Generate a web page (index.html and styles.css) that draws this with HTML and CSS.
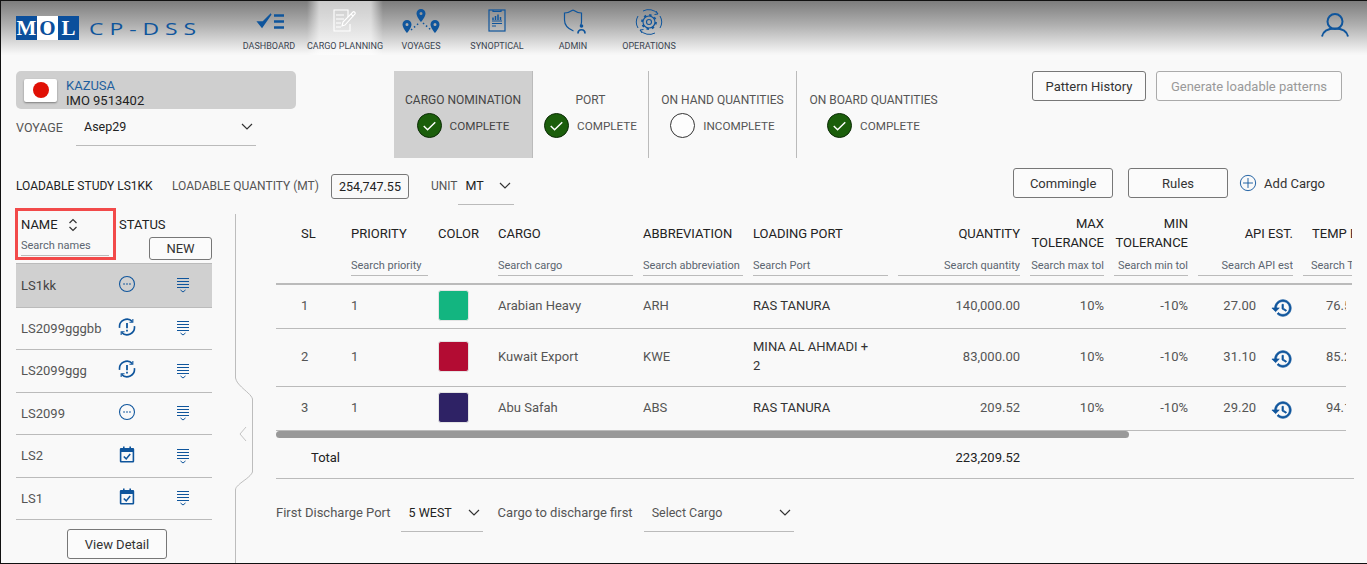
FILE: index.html
```html
<!DOCTYPE html>
<html lang="en">
<head>
    <meta charset="UTF-8">
    <title>CP-DSS Cargo Planning</title>
    <link rel="stylesheet" href="styles.css">
</head>
<body>

<header class="topbar">
    <div class="brand">
        <div class="logo"><span>M</span><span class="logo-mid">O</span><span>L</span></div>
        <div class="brand-name">CP-DSS</div>
    </div>
    <nav class="nav">
        <a class="nav-item">
            <svg class="nav-icon" viewBox="0 0 36 26"><path d="M7 13l4 5 9-13-8 8z" fill="#0f559c" stroke="#0f559c" stroke-width="1.5"/><path d="M23 6.500h10M23 12.500h10M23 18.500h10" stroke="#0f559c" stroke-width="2.400"/></svg>
            DASHBOARD
        </a>
        <a class="nav-item active">
            <svg class="nav-icon" viewBox="0 0 36 26" fill="none" stroke="#fff" stroke-width="1.100"><path d="M21 8V1H7v21h16v-7"/><path d="M9 6h8M9 10h8M9 14h5M9 18h5"/><path d="M15 17l1-4 10-10c1-1 3 1 2 2L18 16z M24 5l2.500 2.500"/></svg>
            CARGO PLANNING
        </a>
        <a class="nav-item">
            <svg class="nav-icon" viewBox="0 0 36 26"><g fill="#0f559c"><path d="M18 0a4.500 4.500 0 0 0-4.500 4.500C13.500 8 18 13 18 13s4.500-5 4.500-8.500A4.500 4.500 0 0 0 18 0zm0 3a1.500 1.500 0 1 1 0 3 1.500 1.500 0 0 1 0-3z"/><path d="M4 11a4.500 4.500 0 0 0-4.500 4.500C-.5 19 4 24 4 24s4.500-5 4.500-8.500A4.500 4.500 0 0 0 4 11zm0 3a1.500 1.500 0 1 1 0 3 1.500 1.500 0 0 1 0-3z"/><path d="M32 11a4.500 4.500 0 0 0-4.500 4.500C27.500 19 32 24 32 24s4.500-5 4.500-8.500A4.500 4.500 0 0 0 32 11zm0 3a1.500 1.500 0 1 1 0 3 1.500 1.500 0 0 1 0-3z"/></g><path d="M8 21l8-7M20 14l8 7" stroke="#0f559c" stroke-width="1.500" stroke-dasharray="1.500 2.500" fill="none"/></svg>
            VOYAGES
        </a>
        <a class="nav-item">
            <svg class="nav-icon" viewBox="0 0 36 26" fill="none" stroke="#0f559c"><rect x="10" y="1" width="16" height="21" stroke-width="1.200"/><path d="M14 1v1.500h8V1" stroke-width="1.200"/><path d="M13 12h10M13 14.500h10M13 17h4" stroke-width="1.100"/><path d="M14 11V8.500M16.500 11V7M19 11V5.500M21.500 11V8" stroke-width="1.500"/></svg>
            SYNOPTICAL
        </a>
        <a class="nav-item">
            <svg class="nav-icon" viewBox="0 0 36 26" fill="none" stroke="#0f559c"><path d="M18 1c3 2 6 3 8.500 3v9c0 2-.5 3-1.200 4M18 1c-3 2-6 3-8.500 3v7c0 6 4 9 9 11" stroke-width="1.200"/><circle cx="26.500" cy="17" r="1.800" fill="#0f559c" stroke="none"/><path d="M23 24.500c0-5 7-5 7 0" stroke-width="1.700"/></svg>
            ADMIN
        </a>
        <a class="nav-item">
            <svg class="nav-icon" viewBox="0 0 36 26" fill="none" stroke="#0f559c"><path d="M27 5a12 12 0 0 0-15-3M9 21a12 12 0 0 0 15 3M7 7a12 12 0 0 0 0 12M29 19a12 12 0 0 0 0-12" stroke-width="1" /><circle cx="18" cy="13" r="2.500" stroke-width="1.100"/><circle cx="18" cy="13" r="6" stroke-width="1.100"/><circle cx="18" cy="13" r="7" stroke-width="1.800" stroke-dasharray="2.400 3.100"/><path d="M25 2l2 3-3.500.5M11 24l-2-3 3.500-.5" stroke-width="1"/></svg>
            OPERATIONS
        </a>
    </nav>
    <svg class="user-icon" viewBox="0 0 28 24" fill="none" stroke="#0f559c" stroke-width="2"><circle cx="14" cy="8.500" r="7.500"/><path d="M1 23.500c1-5 6-8 13-8s12 3 13 8"/></svg>
</header>

<section class="info">
    <div class="ship-col">
        <div class="ship-card">
            <div class="flag"><span class="flag-sun"></span></div>
            <div>
                <div class="ship-name">KAZUSA</div>
                <div class="ship-imo">IMO 9513402</div>
            </div>
        </div>
        <div class="voyage">
            <span class="voyage-label">VOYAGE</span>
            <div class="select voyage-select">Asep29
                <svg class="chev" viewBox="0 0 12 7"><path d="M1 1l5 5 5-5"/></svg>
            </div>
        </div>
    </div>

    <div class="steps">
        <div class="step step-active">
            <div class="step-title">CARGO NOMINATION</div>
            <div class="step-state">
                <span class="tick"><svg viewBox="0 0 24 24"><path d="M6 12.500l4 4 8-8"/></svg></span>COMPLETE
            </div>
        </div>
        <div class="step step-port">
            <div class="step-title">PORT</div>
            <div class="step-state">
                <span class="tick"><svg viewBox="0 0 24 24"><path d="M6 12.500l4 4 8-8"/></svg></span>COMPLETE
            </div>
        </div>
        <div class="step step-hand">
            <div class="step-title">ON HAND QUANTITIES</div>
            <div class="step-state">
                <span class="tick tick-empty"></span>INCOMPLETE
            </div>
        </div>
        <div class="step step-board">
            <div class="step-title">ON BOARD QUANTITIES</div>
            <div class="step-state">
                <span class="tick"><svg viewBox="0 0 24 24"><path d="M6 12.500l4 4 8-8"/></svg></span>COMPLETE
            </div>
        </div>
    </div>

    <div class="info-actions">
        <button class="btn btn-history">Pattern History</button>
        <button class="btn btn-generate">Generate loadable patterns</button>
    </div>
</section>

<section class="study">
    <span class="study-name">LOADABLE STUDY LS1KK</span>
    <span class="study-label">LOADABLE QUANTITY (MT)</span>
    <span class="qty-box">254,747.55</span>
    <span class="study-label unit-label">UNIT</span>
    <div class="select unit-select">MT
        <svg class="chev" viewBox="0 0 12 7"><path d="M1 1l5 5 5-5"/></svg>
    </div>
    <div class="study-actions">
        <button class="btn btn-study">Commingle</button>
        <button class="btn btn-study">Rules</button>
        <div class="add-cargo">
            <svg viewBox="0 0 20 20" fill="none" stroke="#0f559c"><circle cx="10" cy="10" r="8.500"/><path d="M10 4.500v11M4.500 10h11"/></svg>
            Add Cargo
        </div>
    </div>
</section>

<main class="main">
    <aside class="studies">
        <div class="studies-head">
            <div class="name-head">
                <div class="name-title">NAME
                    <svg class="sort" viewBox="0 0 10 14" fill="none" stroke="#333" stroke-width="1.200"><path d="M1.500 5L5 1.500 8.500 5M1.500 9L5 12.500 8.500 9"/></svg>
                </div>
                <input class="search" placeholder="Search names">
            </div>
            <div class="status-head">
                <div class="status-title">STATUS</div>
                <button class="btn btn-new">NEW</button>
            </div>
        </div>

        <div class="study-row selected">
            <span>LS1kk</span>
            <svg class="row-icon" viewBox="0 0 20 20" fill="none" stroke="#0f559c" stroke-width="1.200"><circle cx="10" cy="10" r="8.300"/><path d="M6 10h1.400M9.300 10h1.400M12.600 10H14" stroke-width="1.800"/></svg>
            <svg class="row-menu" viewBox="0 0 14 16" fill="none" stroke="#0f559c" stroke-width="1"><path d="M1 1.500h12M1 4.500h12M1 7.500h12M1 10.500h12"/><path d="M4.500 13l2.500 2 2.500-2"/></svg>
        </div>
        <div class="study-row">
            <span>LS2099gggbb</span>
            <svg class="row-icon" viewBox="0 0 20 20" fill="none" stroke="#0f559c" stroke-width="1.800"><path d="M1.800 11A8.300 8.300 0 0 1 16 4M18.200 9A8.300 8.300 0 0 1 4 16"/><path d="M16.500 1v3.800h-3.800M3.500 19v-3.800h3.800" stroke-width="1.200"/><path d="M10 5.500v6M10 13v2" stroke-width="2"/></svg>
            <svg class="row-menu" viewBox="0 0 14 16" fill="none" stroke="#0f559c" stroke-width="1"><path d="M1 1.500h12M1 4.500h12M1 7.500h12M1 10.500h12"/><path d="M4.500 13l2.500 2 2.500-2"/></svg>
        </div>
        <div class="study-row">
            <span>LS2099ggg</span>
            <svg class="row-icon" viewBox="0 0 20 20" fill="none" stroke="#0f559c" stroke-width="1.800"><path d="M1.800 11A8.300 8.300 0 0 1 16 4M18.200 9A8.300 8.300 0 0 1 4 16"/><path d="M16.500 1v3.800h-3.800M3.500 19v-3.800h3.800" stroke-width="1.200"/><path d="M10 5.500v6M10 13v2" stroke-width="2"/></svg>
            <svg class="row-menu" viewBox="0 0 14 16" fill="none" stroke="#0f559c" stroke-width="1"><path d="M1 1.500h12M1 4.500h12M1 7.500h12M1 10.500h12"/><path d="M4.500 13l2.500 2 2.500-2"/></svg>
        </div>
        <div class="study-row">
            <span>LS2099</span>
            <svg class="row-icon" viewBox="0 0 20 20" fill="none" stroke="#0f559c" stroke-width="1.200"><circle cx="10" cy="10" r="8.300"/><path d="M6 10h1.400M9.300 10h1.400M12.600 10H14" stroke-width="1.800"/></svg>
            <svg class="row-menu" viewBox="0 0 14 16" fill="none" stroke="#0f559c" stroke-width="1"><path d="M1 1.500h12M1 4.500h12M1 7.500h12M1 10.500h12"/><path d="M4.500 13l2.500 2 2.500-2"/></svg>
        </div>
        <div class="study-row">
            <span>LS2</span>
            <svg class="row-icon row-cal" viewBox="0 0 20 20"><path d="M5 0h2v2h6V0h2v2h2.500A1.500 1.500 0 0 1 19 3.500v15a1.500 1.500 0 0 1-1.500 1.500h-15A1.500 1.500 0 0 1 1 18.500v-15A1.500 1.500 0 0 1 2.500 2H5z M3 7v11h14V7z" fill="#0f559c" fill-rule="evenodd"/><path d="M6 12.500l3 3 5-6" fill="none" stroke="#0f559c" stroke-width="2"/></svg>
            <svg class="row-menu" viewBox="0 0 14 16" fill="none" stroke="#0f559c" stroke-width="1"><path d="M1 1.500h12M1 4.500h12M1 7.500h12M1 10.500h12"/><path d="M4.500 13l2.500 2 2.500-2"/></svg>
        </div>
        <div class="study-row">
            <span>LS1</span>
            <svg class="row-icon row-cal" viewBox="0 0 20 20"><path d="M5 0h2v2h6V0h2v2h2.500A1.500 1.500 0 0 1 19 3.500v15a1.500 1.500 0 0 1-1.500 1.500h-15A1.500 1.500 0 0 1 1 18.500v-15A1.500 1.500 0 0 1 2.500 2H5z M3 7v11h14V7z" fill="#0f559c" fill-rule="evenodd"/><path d="M6 12.500l3 3 5-6" fill="none" stroke="#0f559c" stroke-width="2"/></svg>
            <svg class="row-menu" viewBox="0 0 14 16" fill="none" stroke="#0f559c" stroke-width="1"><path d="M1 1.500h12M1 4.500h12M1 7.500h12M1 10.500h12"/><path d="M4.500 13l2.500 2 2.500-2"/></svg>
        </div>
        <div class="studies-foot">
            <button class="btn btn-detail">View Detail</button>
        </div>
    </aside>

    <svg class="splitter" viewBox="0 0 64 350" fill="none"><path d="M23.500 0v164c1 4 3 6 6 9 4 4 10 8 11 12v73c-2 5-10 9-14 13-2 2-3 3-3 5v84" stroke="#bdbdbd"/><path d="M34 213l-6 7 6 7" stroke="#c4c4c4"/></svg>

    <div class="cargo">
        <div class="cargo-head">
            <table class="cargo-table">
                <colgroup>
                    <col class="c-sl"><col class="c-pri"><col class="c-color"><col class="c-cargo"><col class="c-abbr"><col class="c-port"><col class="c-qty"><col class="c-tol"><col class="c-tol"><col class="c-api"><col class="c-temp">
                </colgroup>
                <thead>
                    <tr class="labels">
                        <th class="sl">SL</th>
                        <th>PRIORITY</th>
                        <th>COLOR</th>
                        <th>CARGO</th>
                        <th>ABBREVIATION</th>
                        <th>LOADING PORT</th>
                        <th class="num">QUANTITY</th>
                        <th class="num">MAX TOLERANCE</th>
                        <th class="num">MIN TOLERANCE</th>
                        <th class="num">API EST.</th>
                        <th class="temp-head">TEMP EST.</th>
                    </tr>
                    <tr class="filters">
                        <th></th>
                        <th><input class="search" placeholder="Search priority"></th>
                        <th></th>
                        <th><input class="search" placeholder="Search cargo"></th>
                        <th><input class="search" placeholder="Search abbreviation"></th>
                        <th><input class="search" placeholder="Search Port"></th>
                        <th><input class="search num" placeholder="Search quantity"></th>
                        <th><input class="search num" placeholder="Search max tol"></th>
                        <th><input class="search num" placeholder="Search min tol"></th>
                        <th><input class="search num" placeholder="Search API est"></th>
                        <th><input class="search search-temp" placeholder="Search Temp est"></th>
                    </tr>
                </thead>
            </table>
        </div>
        <div class="cargo-body">
            <table class="cargo-table">
                <colgroup>
                    <col class="c-sl"><col class="c-pri"><col class="c-color"><col class="c-cargo"><col class="c-abbr"><col class="c-port"><col class="c-qty"><col class="c-tol"><col class="c-tol"><col class="c-api"><col class="c-temp">
                </colgroup>
                <tbody>
                    <tr class="row-short">
                        <td class="sl">1</td><td>1</td>
                        <td><span class="swatch swatch-green"></span></td>
                        <td>Arabian Heavy</td><td>ARH</td><td class="port">RAS TANURA</td>
                        <td class="num">140,000.00</td><td class="num">10%</td><td class="num">-10%</td>
                        <td class="num">27.00<svg class="history" viewBox="0 0 24 24"><path d="M13 3c-4.970 0-9 4.030-9 9H1l3.890 3.890.07.140L9 12H6c0-3.870 3.130-7 7-7s7 3.130 7 7-3.130 7-7 7c-1.930 0-3.680-.79-4.940-2.060l-1.420 1.420C8.270 19.990 10.510 21 13 21c4.970 0 9-4.030 9-9s-4.030-9-9-9zm-1 5v5l4.280 2.540.72-1.210-3.500-2.080V8H12z"/></svg></td>
                        <td class="temp">76.50</td>
                    </tr>
                    <tr class="row-tall">
                        <td class="sl">2</td><td>1</td>
                        <td><span class="swatch swatch-red"></span></td>
                        <td>Kuwait Export</td><td>KWE</td><td class="port">MINA AL AHMADI + 2</td>
                        <td class="num">83,000.00</td><td class="num">10%</td><td class="num">-10%</td>
                        <td class="num">31.10<svg class="history" viewBox="0 0 24 24"><path d="M13 3c-4.970 0-9 4.030-9 9H1l3.890 3.890.07.140L9 12H6c0-3.870 3.130-7 7-7s7 3.130 7 7-3.130 7-7 7c-1.930 0-3.680-.79-4.940-2.060l-1.420 1.420C8.270 19.990 10.510 21 13 21c4.970 0 9-4.030 9-9s-4.030-9-9-9zm-1 5v5l4.280 2.540.72-1.210-3.500-2.080V8H12z"/></svg></td>
                        <td class="temp">85.20</td>
                    </tr>
                    <tr class="row-last">
                        <td class="sl">3</td><td>1</td>
                        <td><span class="swatch swatch-navy"></span></td>
                        <td>Abu Safah</td><td>ABS</td><td class="port">RAS TANURA</td>
                        <td class="num">209.52</td><td class="num">10%</td><td class="num">-10%</td>
                        <td class="num">29.20<svg class="history" viewBox="0 0 24 24"><path d="M13 3c-4.970 0-9 4.030-9 9H1l3.890 3.890.07.140L9 12H6c0-3.870 3.130-7 7-7s7 3.130 7 7-3.130 7-7 7c-1.930 0-3.680-.79-4.940-2.060l-1.420 1.420C8.270 19.990 10.510 21 13 21c4.970 0 9-4.030 9-9s-4.030-9-9-9zm-1 5v5l4.280 2.540.72-1.210-3.500-2.080V8H12z"/></svg></td>
                        <td class="temp">94.10</td>
                    </tr>
                </tbody>
            </table>
            <div class="scroll-thumb"></div>
        </div>
        <div class="total">
            <span class="total-label">Total</span>
            <span class="total-value">223,209.52</span>
        </div>
        <div class="discharge">
            <span>First Discharge Port</span>
            <div class="select port-select">5 WEST
                <svg class="chev" viewBox="0 0 12 7"><path d="M1 1l5 5 5-5"/></svg>
            </div>
            <span>Cargo to discharge first</span>
            <div class="select cargo-select">Select Cargo
                <svg class="chev" viewBox="0 0 12 7"><path d="M1 1l5 5 5-5"/></svg>
            </div>
        </div>
    </div>
</main>

</body>
</html>
```

FILE: styles.css
```css
* {
    box-sizing: border-box;
}

html, body {
    margin: 0;
    height: 100%;
}

body {
    width: 1367px;
    height: 564px;
    overflow: hidden;
    background-color: #f9f9f9;
    border-top: 1px solid #111;
    border-left: 1px solid #111;
    border-bottom: 1px solid #111;
    font-family: Roboto, "Liberation Sans", sans-serif;
    font-size: 12px;
    color: #555;
}

button {
    font-family: inherit;
}

/* top bar */
.topbar {
    display: flex;
    height: 54px;
    padding-left: 15px;
    background: linear-gradient(#7d7d7d, #b0b0b0 45%, #f7f7f7 98%);
}

.brand {
    display: flex;
    align-items: center;
    width: 215px;
    height: 39px;
    padding-top: 15px;
}

.logo {
    display: flex;
    width: 63px;
    height: 24px;
    background-color: #0b4f9c;
    font-family: "Liberation Serif", serif;
    font-weight: bold;
    font-size: 21px;
    line-height: 24px;
    color: #fff;
}

.logo span {
    width: 21px;
    text-align: center;
}

.logo-mid {
    background-color: #fff;
    color: #0b4f9c;
}

.brand-name {
    margin-left: 10px;
    font-family: "Open Sans", sans-serif;
    font-size: 17px;
    letter-spacing: 4.400px;
    color: #0f559c;
    transform: scaleX(1.35);
    transform-origin: left center;
}

.nav {
    display: flex;
}

.nav-item {
    display: flex;
    flex-direction: column;
    align-items: center;
    width: 76px;
    padding-top: 8px;
    font-size: 9px;
    color: #3a4450;
    white-space: nowrap;
}

.nav-item.active {
    background: linear-gradient(to right, rgba(255, 255, 255, 0), rgba(255, 255, 255, .6) 16%, rgba(255, 255, 255, .6) 84%, rgba(255, 255, 255, 0));
}

.nav-icon {
    width: 36px;
    height: 26px;
    margin-bottom: 6px;
    overflow: visible;
}

.user-icon {
    width: 28px;
    height: 24px;
    margin: 12px 18px 0 auto;
}

/* ship + steps */
.info {
    display: flex;
    height: 87px;
    margin-top: 16px;
    padding-left: 15px;
}

.ship-col {
    width: 280px;
}

.ship-card {
    display: flex;
    align-items: center;
    height: 38px;
    padding: 5px 0 0 8px;
    background-color: #cfcfcf;
    border-radius: 5px;
    font-size: 13px;
    line-height: 15px;
}

.flag {
    display: flex;
    align-items: center;
    justify-content: center;
    width: 33px;
    height: 23px;
    margin: -5px 9px 0 0;
    background-color: #fff;
    border-radius: 2px;
    box-shadow: 0 1px 2px rgba(0, 0, 0, .4);
}

.flag-sun {
    width: 16px;
    height: 16px;
    background-color: #e01005;
    border-radius: 50%;
}

.ship-name {
    color: #1f5f9e;
}

.ship-imo {
    color: #222;
}

.voyage {
    display: flex;
    align-items: center;
    margin-top: 7px;
    font-size: 12.500px;
}

.voyage-label {
    width: 60px;
    margin-bottom: 8px;
}

.select {
    display: flex;
    align-items: center;
    justify-content: space-between;
    border-bottom: 1px solid #bbb;
    font-size: 12.500px;
    color: #222;
}

.chev {
    width: 12px;
    height: 7px;
    fill: none;
    stroke: #333;
    stroke-width: 1.200;
}

.voyage-select {
    width: 180px;
    height: 30px;
    padding: 0 3px 8px 8px;
}

.steps {
    display: flex;
    margin-left: 98px;
}

.step {
    display: flex;
    flex-direction: column;
    align-items: center;
    padding-top: 21px;
    border-right: 1px solid #bbb;
    color: #555;
}

.step-active {
    width: 139px;
    background-color: #d0d0d0;
    color: #444;
}

.step-port {
    width: 116px;
}

.step-hand {
    width: 148px;
}

.step-board {
    width: 153px;
    border-right: none;
}

.step-title {
    height: 16px;
    line-height: 16px;
    white-space: nowrap;
}

.step-state {
    display: flex;
    align-items: center;
    margin-top: 5px;
    font-size: 11.700px;
}

.tick {
    display: block;
    width: 25px;
    height: 25px;
    margin-right: 8px;
    background-color: #1b5e0b;
    border: 1px solid #0c2c06;
    border-radius: 50%;
}

.tick svg {
    display: block;
    width: 23px;
    height: 23px;
    fill: none;
    stroke: #fff;
    stroke-width: 1.500;
}

.tick-empty {
    background-color: #fdfdfd;
    border-color: #333;
}

.info-actions {
    display: flex;
    gap: 10px;
    margin-left: auto;
    padding-right: 25px;
}

.btn {
    height: 30px;
    padding: 0;
    background-color: #fbfbfb;
    border: 1px solid #777;
    border-radius: 3px;
    font-size: 13px;
    color: #333;
}

.btn-history {
    width: 114px;
}

.btn-generate {
    width: 186px;
    border-color: #aaa;
    color: #999;
}

/* study row */
.study {
    display: flex;
    align-items: center;
    height: 38px;
    margin-top: 9px;
    padding-left: 15px;
}

.study-name {
    width: 156px;
    font-size: 12px;
    color: #222;
}

.study-label {
    font-size: 12px;
    white-space: nowrap;
}

.qty-box {
    width: 78px;
    height: 25px;
    margin-left: 12px;
    border: 1px solid #777;
    border-radius: 3px;
    line-height: 23px;
    text-align: center;
    font-size: 12.500px;
    color: #222;
}

.unit-label {
    margin-left: 22px;
}

.unit-select {
    width: 56px;
    height: 37px;
    padding: 0 3px 0 8px;
}

.study-actions {
    display: flex;
    align-items: center;
    margin: -6px 0 0 auto;
    padding-right: 42px;
}

.btn-study {
    width: 100px;
    margin-right: 15px;
}

.btn-study + .btn-study {
    margin-right: 11px;
}

.add-cargo {
    display: flex;
    align-items: center;
    gap: 7px;
    font-size: 13px;
    color: #333;
}

.add-cargo svg {
    width: 18px;
    height: 18px;
}

/* main area */
.main {
    display: flex;
    height: 350px;
    margin-top: 9px;
    padding-left: 15px;
}

.studies {
    width: 196px;
}

.studies-head {
    display: flex;
    height: 52px;
    margin-top: -6px;
}

.name-head {
    width: 101px;
    height: 52px;
    margin-left: -1px;
    padding: 7px 3px 0 3px;
    border: 3px solid #f24a4a;
    color: #222;
}

.name-title {
    display: flex;
    align-items: center;
    font-size: 13px;
    line-height: 14px;
}

.sort {
    width: 10px;
    height: 14px;
    margin-left: 10px;
}

.search {
    display: block;
    width: 100%;
    height: 21px;
    padding: 0;
    background: none;
    border: none;
    border-bottom: 1px solid #bbb;
    outline: none;
    font-family: inherit;
    font-size: 11px;
}

.search::placeholder {
    color: #5b6570;
    opacity: 1;
}

.search.num {
    text-align: right;
}

.search-temp {
    padding-left: 8px;
}

.name-head .search {
    width: 88px;
    margin-top: 3px;
}

.status-head {
    display: flex;
    flex-direction: column;
    flex: 1;
    padding-top: 10px;
    padding-left: 3px;
}

.status-title {
    font-size: 13px;
    line-height: 14px;
    color: #222;
}

.btn-new {
    align-self: flex-end;
    width: 63px;
    height: 23px;
    margin-top: 5px;
    font-size: 13px;
}

.study-row {
    display: grid;
    grid-template-columns: 95px 32px 1fr;
    align-items: center;
    height: 42.500px;
    padding-left: 5px;
    border-bottom: 1px solid #bbb;
    font-size: 13px;
}

.study-row.selected {
    height: 44.500px;
    margin-top: 3px;
    background-color: #d0d0d0;
    border-top: 1px solid #bbb;
    color: #444;
}

.row-icon {
    width: 18px;
    height: 18px;
    margin: -3px 0 0 2px;
}

.row-cal {
    width: 16px;
    height: 17px;
    margin-left: 3px;
}

.row-menu {
    width: 14px;
    height: 16px;
    margin-left: 28px;
}

.studies-foot {
    display: flex;
    justify-content: center;
    padding: 9px 0 0 6px;
}

.btn-detail {
    width: 100px;
}

.splitter {
    width: 64px;
    height: 350px;
    flex-shrink: 0;
}

/* cargo table */
.cargo {
    width: 1078px;
}

.cargo-head {
    width: 1076px;
    overflow: hidden;
}

.cargo-body {
    width: 1070px;
    overflow: hidden;
}

.scroll-thumb {
    width: 853px;
    height: 7px;
    background-color: #999;
    border-radius: 4px;
}

.cargo-table {
    width: 1342px;
    table-layout: fixed;
    border-collapse: collapse;
}

.c-sl { width: 70px; }
.c-pri { width: 87px; }
.c-color { width: 60px; }
.c-cargo { width: 145px; }
.c-abbr { width: 110px; }
.c-port { width: 145px; }
.c-qty { width: 132px; }
.c-tol { width: 84px; }
.c-api { width: 105px; }
.c-temp { width: 320px; }

th {
    padding: 0 5px;
    text-align: left;
    font-weight: normal;
    font-size: 13px;
    line-height: 19px;
    color: #222;
}

th.sl, td.sl {
    padding-left: 25px;
}

.labels {
    height: 38px;
}

th.temp-head {
    padding-left: 14px;
    white-space: nowrap;
}

.filters {
    height: 32px;
    border-bottom: 2px solid #bbb;
}

.filters th {
    vertical-align: top;
    padding-top: 3px;
}

td {
    padding: 0 5px 2px;
    border-bottom: 1px solid #bbb;
    font-size: 13px;
    line-height: 19px;
    color: #555;
    vertical-align: middle;
}

.row-short {
    height: 43px;
}

.row-tall {
    height: 58px;
}

.row-last {
    height: 44px;
}

td.port {
    padding-right: 20px;
    color: #333;
}

th.num, td.num {
    text-align: right;
}

.swatch {
    display: block;
    width: 31px;
    height: 31px;
    border: 1px solid #e4e4e4;
    border-radius: 3px;
}

.swatch-green { background-color: #13b580; }
.swatch-red { background-color: #b30c33; }
.swatch-navy { background-color: #2e2265; }

.history {
    width: 22px;
    height: 22px;
    margin: -6px 0 -6px 15px;
    vertical-align: -3px;
    fill: #0f559c;
    stroke: #0f559c;
    stroke-width: .8;
}

td.temp {
    padding-left: 28px;
}

.total {
    display: flex;
    align-items: center;
    height: 41px;
    border-bottom: 1px solid #bbb;
    font-size: 13px;
    color: #222;
}

.total-label {
    margin-left: 35px;
}

.total-value {
    margin: 0 334px 0 auto;
}

.discharge {
    display: flex;
    align-items: center;
    margin-top: 15px;
    font-size: 13px;
}

.port-select {
    width: 82px;
    height: 38px;
    margin: 0 15px 0 10px;
    padding: 0 3px 0 8px;
}

.cargo-select {
    width: 150px;
    height: 38px;
    margin-left: 11px;
    padding: 0 3px 0 8px;
    color: #555;
}
```
